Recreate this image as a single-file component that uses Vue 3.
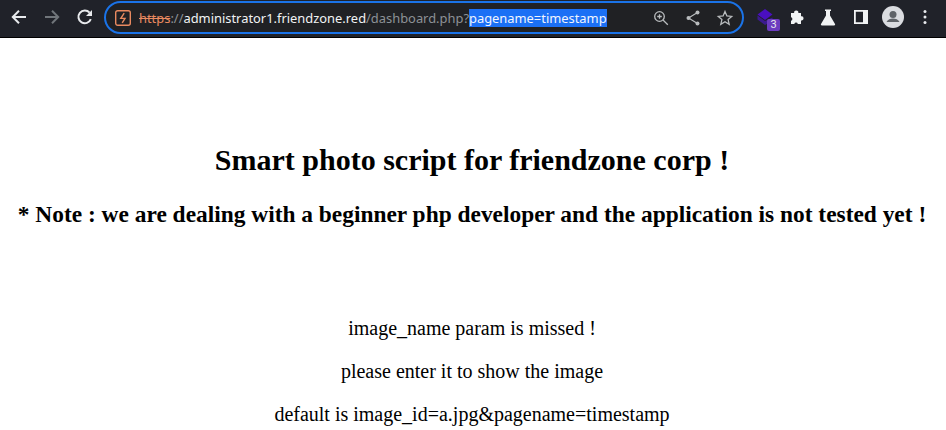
<script setup>
</script>

<template>
  <div class="page">
    <header class="bar">
      <div class="nav">
        <svg class="ic" width="20" height="20" viewBox="0 0 20 20"><path d="M17 10H4.500M10 3.800 3.800 10l6.200 6.200" fill="none" stroke="#e8eaed" stroke-width="2"/></svg>
        <svg class="ic" width="20" height="20" viewBox="0 0 20 20"><path d="M3 10h12.500M10 3.800l6.200 6.200-6.200 6.200" fill="none" stroke="#70757a" stroke-width="2"/></svg>
        <svg class="ic" width="20" height="20" viewBox="0 0 20 20"><path d="M15.800 12.200A6.400 6.400 0 1 1 14.600 5.600" fill="none" stroke="#e8eaed" stroke-width="2"/><path d="M17 3v6h-6z" fill="#e8eaed"/></svg>
      </div>
      <div class="omni">
        <svg class="warn" width="18" height="18" viewBox="0 0 18 18"><rect x="1.700" y="1.700" width="14.600" height="14.600" rx="2" fill="none" stroke="#e98a60" stroke-width="1.400"/><path d="M10.200 4.200 6.800 9.400h4.200L8.200 13.800" fill="none" stroke="#e98a60" stroke-width="1.400"/></svg>
        <div class="url"><span class="https">https</span><span class="dim">://</span><span class="host">administrator1.friendzone.red</span><span class="dim">/dashboard.php?</span><span class="sel">pagename=timestamp</span></div>
        <div class="omni-icons">
          <svg width="18" height="18" viewBox="0 0 18 18"><circle cx="7.500" cy="7.500" r="4.800" fill="none" stroke="#b9bcbe" stroke-width="1.300"/><path d="m11 11 4.800 4.800M5.200 7.500h4.600M7.500 5.200v4.600" fill="none" stroke="#b9bcbe" stroke-width="1.300"/></svg>
          <svg width="18" height="18" viewBox="0 0 18 18"><path d="M13.500 3.500 4.500 9l9 5.500" fill="none" stroke="#b9bcbe" stroke-width="1.200"/><circle cx="13.500" cy="3.500" r="2" fill="#b9bcbe"/><circle cx="4.500" cy="9" r="2" fill="#b9bcbe"/><circle cx="13.500" cy="14.500" r="2" fill="#b9bcbe"/></svg>
          <svg width="18" height="18" viewBox="0 0 18 18"><path d="m9 2.500 1.900 4.500 4.800.4-3.600 3.200 1.100 4.700L9 12.800l-4.200 2.500 1.100-4.700-3.600-3.200 4.800-.4z" fill="none" stroke="#b9bcbe" stroke-width="1.300"/></svg>
        </div>
      </div>
      <div class="tools">
        <div class="ext">
          <svg width="18" height="20" viewBox="0 0 18 20"><path d="M.5 8.500 8 14l7.500-3.500V14L8 18 .5 12.500z" fill="#3b1a8f"/><path d="M.5 7.500 8 2l7.500 5.500L8 13z" fill="#4a0fc0"/></svg>
          <span class="badge">3</span>
        </div>
        <svg class="puzzle" width="18" height="18" viewBox="0 0 18 18"><path d="M3 5h3.200a2.100 2.100 0 1 1 4.100 0H13v3.300a2.100 2.100 0 1 1 0 4.100V16H9.800a1.800 1.800 0 0 0-3.500 0H3v-3.300a1.800 1.800 0 0 0 0-3.500z" fill="#f1f3f4"/></svg>
        <svg class="flask" width="18" height="18" viewBox="0 0 18 18"><path d="M6 1.500h6v1.500h-1v4.500l5 8.500a1 1 0 0 1-.9 1.500H2.900a1 1 0 0 1-.9-1.500l5-8.500V3H6z" fill="#f1f3f4"/></svg>
        <svg class="side" width="16" height="16" viewBox="0 0 16 16"><path fill-rule="evenodd" d="M1 1h14v14H1zM2.800 2.800v10.400h7.200V2.800z" fill="#f1f3f4"/></svg>
        <svg class="avatar" width="22" height="22" viewBox="0 0 22 22"><circle cx="11" cy="11" r="11" fill="#dadce0"/><circle cx="11" cy="8.500" r="3.500" fill="#5f6368"/><path d="M4.500 16c1-2.500 4-3.500 6.500-3.500s5.500 1 6.500 3.500z" fill="#5f6368"/></svg>
        <svg class="more" width="6" height="16" viewBox="0 0 6 16"><circle cx="3" cy="2.500" r="1.500" fill="#e8eaed"/><circle cx="3" cy="8" r="1.500" fill="#e8eaed"/><circle cx="3" cy="13.500" r="1.500" fill="#e8eaed"/></svg>
      </div>
    </header>
    <main class="content">
      <h1>Smart photo script for friendzone corp !</h1>
      <h2>* Note : we are dealing with a beginner php developer and the application is not tested yet !</h2>
      <div class="msgs">
        <p>image_name param is missed !</p>
        <p>please enter it to show the image</p>
        <p>default is image_id=a.jpg&amp;pagename=timestamp</p>
      </div>
    </main>
  </div>
</template>

<style>
html, body { margin: 0; background: #fff; overflow: hidden; }
</style>

<style scoped>
.page { width: 946px; height: 430px; overflow: hidden; font-family: "Liberation Serif", serif; color: #000; }
.bar { height: 34px; padding-bottom: 3px; border-bottom: 1px solid #000; background: #202229; display: flex; align-items: center; box-sizing: content-box; }
.nav { display: flex; align-items: center; gap: 13px; padding-left: 9px; width: 104px; flex: none; box-sizing: border-box; }
.ic { flex: none; }
.omni { width: 640px; height: 33px; flex: none; align-self: flex-start; margin-top: 1px; box-sizing: border-box; border: 2px solid #1a73e8; border-radius: 17px; display: flex; align-items: center; padding-left: 8px; background: #202124; }
.warn { flex: none; }
.url { margin-left: 7px; flex: 1; font: 12.9px/20px "Noto Sans", sans-serif; white-space: nowrap; color: #8d9196; }
.https { color: #e98a60; text-decoration: line-through; }
.dim { color: #8d9196; }
.host { color: #f1f3f4; }
.sel { background: #1b70f5; color: #f1f5fe; }
.omni-icons { display: flex; gap: 14px; align-items: center; padding-right: 8px; }
.tools { display: flex; align-items: center; padding-left: 13px; }
.ext { position: relative; width: 24px; height: 24px; display: flex; align-items: center; }
.badge { position: absolute; right: 1px; bottom: -2px; width: 13px; height: 12px; border-radius: 2px; background: #6c3cc0; color: #e8eaed; font: 11px/12px Roboto, sans-serif; text-align: center; }
.puzzle { margin-left: 7px; }
.flask { margin-left: 13px; }
.side { margin-left: 16px; }
.avatar { margin-left: 13px; }
.more { margin-left: 18px; }
.content { text-align: center; padding-right: 2px; }
h1 { margin: 0; padding-top: 104px; font-size: 30px; line-height: 35px; font-weight: 700; }
h2 { margin: 24px 0 0; font-size: 23.4px; line-height: 27px; font-weight: 700; }
.msgs { margin-top: 89px; font-size: 20px; line-height: 23px; }
.msgs p { margin: 0 0 20px; }
</style>
